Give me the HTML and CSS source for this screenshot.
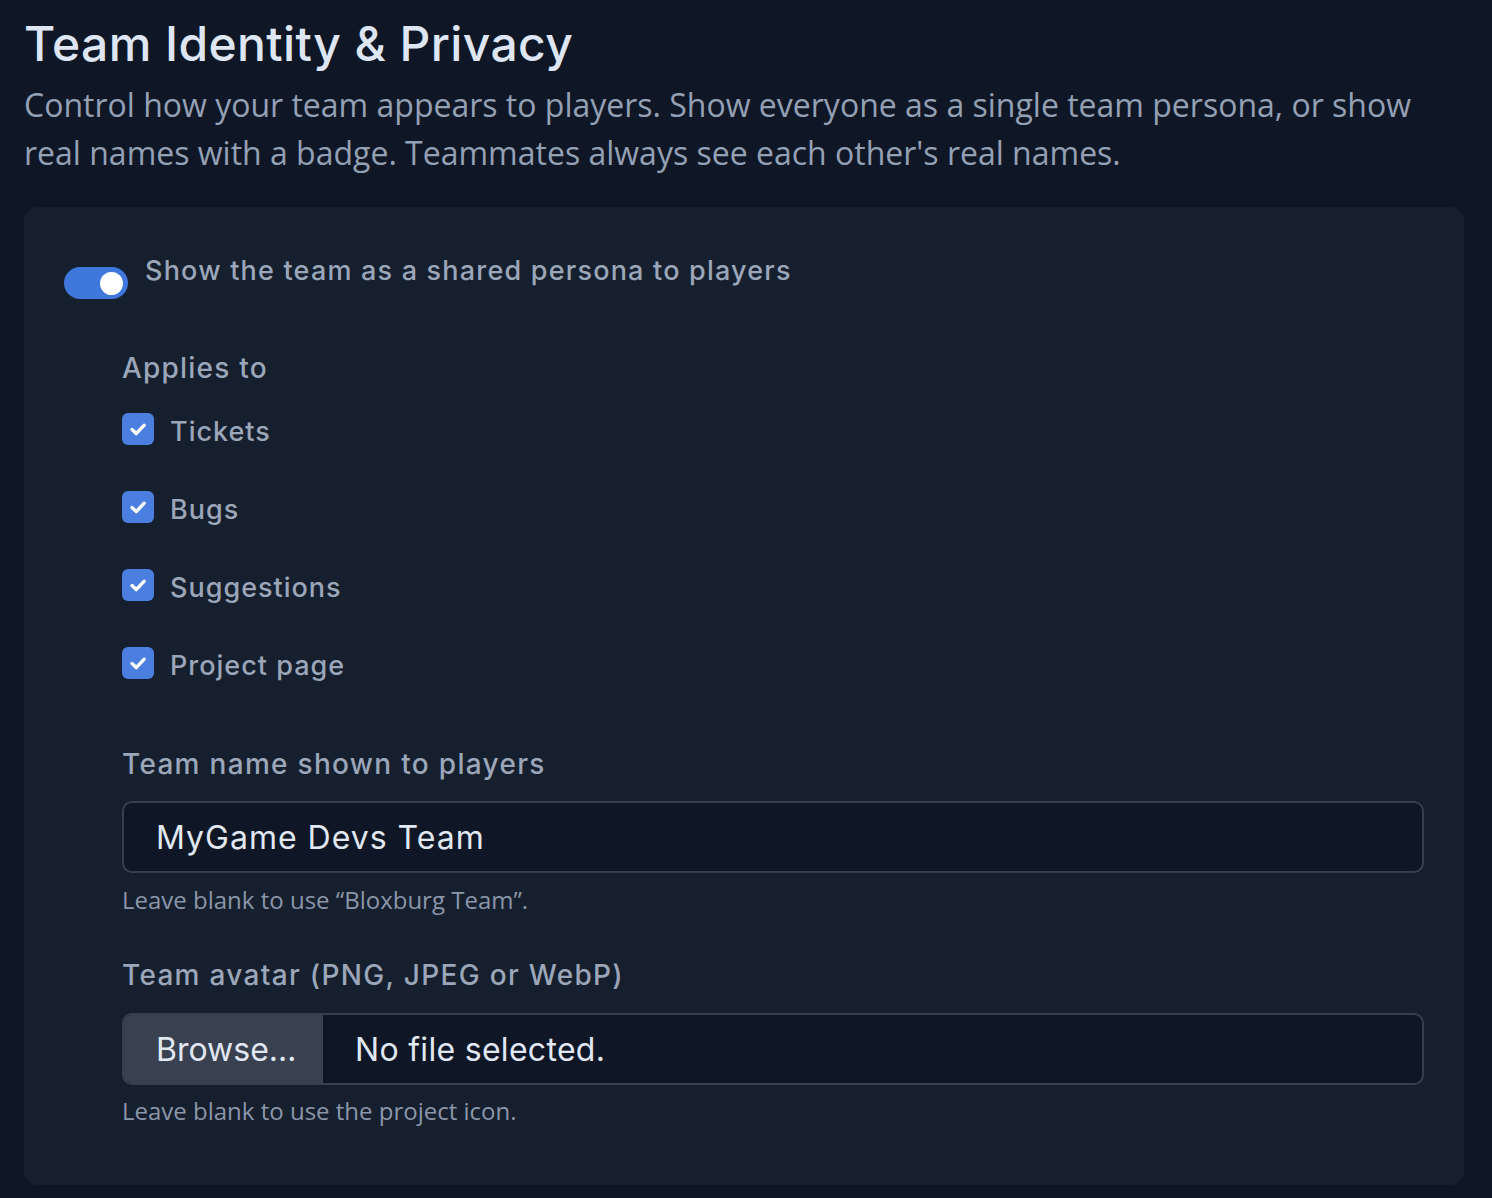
FILE: index.html
```html
<!DOCTYPE html>
<html lang="en">
<head>
    <meta charset="UTF-8">
    <meta name="viewport" content="width=device-width, initial-scale=1.0">
    <title>Team Identity &amp; Privacy</title>
    <link rel="stylesheet" href="styles.css">
</head>
<body>
    <main class="page">
        <h1 class="title">Team Identity &amp; Privacy</h1>
        <p class="intro">Control how your team appears to players. Show everyone as a single team persona, or show real names with a badge. Teammates always see each other's real names.</p>

        <section class="card">
            <label class="switch-row">
                <span class="switch"><span class="knob"></span></span>
                <span class="switch-label">Show the team as a shared persona to players</span>
            </label>

            <div class="options">
                <div class="group-label">Applies to</div>

                <div class="checks">
                    <label class="check-row">
                        <span class="check"><svg viewBox="0 0 32 32" width="32" height="32"><path d="M10 16.6l4.2 4 8-8.4" fill="none" stroke="#fff" stroke-width="3.4" stroke-linecap="round" stroke-linejoin="round"/></svg></span>
                        <span class="check-text">Tickets</span>
                    </label>
                    <label class="check-row">
                        <span class="check"><svg viewBox="0 0 32 32" width="32" height="32"><path d="M10 16.6l4.2 4 8-8.4" fill="none" stroke="#fff" stroke-width="3.4" stroke-linecap="round" stroke-linejoin="round"/></svg></span>
                        <span class="check-text">Bugs</span>
                    </label>
                    <label class="check-row">
                        <span class="check"><svg viewBox="0 0 32 32" width="32" height="32"><path d="M10 16.6l4.2 4 8-8.4" fill="none" stroke="#fff" stroke-width="3.4" stroke-linecap="round" stroke-linejoin="round"/></svg></span>
                        <span class="check-text">Suggestions</span>
                    </label>
                    <label class="check-row">
                        <span class="check"><svg viewBox="0 0 32 32" width="32" height="32"><path d="M10 16.6l4.2 4 8-8.4" fill="none" stroke="#fff" stroke-width="3.4" stroke-linecap="round" stroke-linejoin="round"/></svg></span>
                        <span class="check-text">Project page</span>
                    </label>
                </div>

                <div class="field">
                    <label class="field-label" for="teamName">Team name shown to players</label>
                    <input class="text-input" id="teamName" type="text" value="MyGame Devs Team">
                    <p class="hint">Leave blank to use “Bloxburg Team”.</p>
                </div>

                <div class="field">
                    <label class="field-label">Team avatar (PNG, JPEG or WebP)</label>
                    <div class="file-input">
                        <span class="browse">Browse…</span>
                        <span class="file-name">No file selected.</span>
                    </div>
                    <p class="hint">Leave blank to use the project icon.</p>
                </div>
            </div>
        </section>
    </main>
</body>
</html>
```

FILE: styles.css
```css
body {
    margin: 0;
    background: #0f1726;
    font-family: Inter, "Noto Sans", sans-serif;
    color: #dce5f1;
}

.page {
    padding: 14px 28px 13px 24px;
}

.title {
    margin: 0;
    font-size: 48px;
    font-weight: 500;
    line-height: 60px;
    letter-spacing: 0.4px;
    color: #dde6f2;
}

.intro {
    margin: 7px 0 0;
    font-family: "Open Sans", sans-serif;
    font-size: 32px;
    line-height: 48px;
    color: #94a0b4;
}

.card {
    margin-top: 30px;
    background: #161f2e;
    border-radius: 14px;
    padding: 46px 40px 59px;
}

.switch-row {
    display: flex;
    align-items: flex-start;
    gap: 17px;
}

.switch {
    flex: none;
    width: 64px;
    height: 32px;
    margin-top: 14px;
    border-radius: 16px;
    background: #3f77dd;
    display: flex;
    align-items: center;
    justify-content: flex-end;
    padding: 0 5px;
    box-sizing: border-box;
}

.knob {
    width: 23px;
    height: 23px;
    border-radius: 50%;
    background: #fff;
}

.switch-label {
    font-size: 27px;
    font-weight: 500;
    line-height: 36px;
    color: #9ba6b9;
    letter-spacing: 1.2px;
}

.options {
    padding-left: 58px;
}

.group-label {
    margin-top: 51px;
    font-size: 28px;
    font-weight: 500;
    line-height: 36px;
    color: #9ba6b9;
    letter-spacing: 1.2px;
}

.checks {
    margin-top: 27px;
    display: flex;
    flex-direction: column;
    gap: 46px;
}

.check-row {
    display: flex;
    align-items: center;
    gap: 16px;
    height: 32px;
    font-size: 27px;
    font-weight: 500;
    color: #9ba6b9;
    letter-spacing: 1px;
}

.check-text {
    padding-top: 5px;
}

.check {
    flex: none;
    width: 32px;
    height: 32px;
    border-radius: 6px;
    background: #4a7fe0;
}

.check svg {
    display: block;
}

.field {
    margin-top: 67px;
}

.field + .field {
    margin-top: 42px;
}

.field-label {
    display: block;
    font-size: 28px;
    font-weight: 500;
    line-height: 36px;
    color: #9ba6b9;
    letter-spacing: 1.3px;
}

.text-input {
    display: block;
    width: 100%;
    box-sizing: border-box;
    margin-top: 19px;
    height: 72px;
    padding: 0 32px;
    background: #0f1726;
    border: 2px solid #363f4e;
    border-radius: 10px;
    font-family: Inter, "Noto Sans", sans-serif;
    font-size: 32px;
    letter-spacing: 1px;
    color: #e1e8f2;
    outline: none;
}

.file-input {
    display: flex;
    margin-top: 20px;
    height: 72px;
    box-sizing: border-box;
    border: 2px solid #363f4e;
    border-radius: 10px;
    background: #0f1726;
    overflow: hidden;
    font-size: 32px;
    color: #e1e8f2;
}

.browse {
    width: 199px;
    background: #394150;
    display: flex;
    align-items: center;
    padding-left: 32px;
    box-sizing: border-box;
}

.file-name {
    display: flex;
    align-items: center;
    padding-left: 32px;
    letter-spacing: 0.3px;
}

.hint {
    margin: 12px 0 0;
    font-family: "Open Sans", sans-serif;
    font-size: 24px;
    line-height: 30px;
    color: #8b96a9;
}

.field + .field .hint {
    margin-top: 11px;
}
```
